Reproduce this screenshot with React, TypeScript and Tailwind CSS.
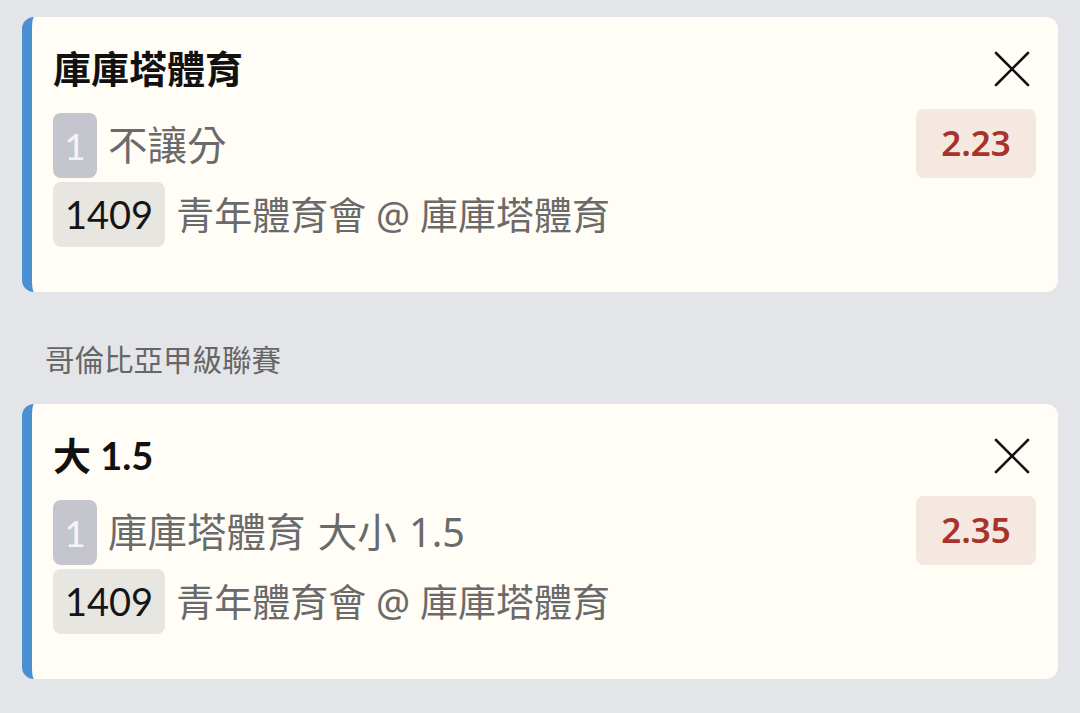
import React from "react";

type Bet = {
  title: string;
  selection: string;
  odds: string;
  matchId: string;
  match: string;
};

const bets: Bet[] = [
  { title: "庫庫塔體育", selection: "不讓分", odds: "2.23", matchId: "1409", match: "青年體育會 @ 庫庫塔體育" },
  { title: "大 1.5", selection: "庫庫塔體育 大小 1.5", odds: "2.35", matchId: "1409", match: "青年體育會 @ 庫庫塔體育" },
];

const noto = { fontFamily: '"Noto Sans", "Noto Sans CJK TC", sans-serif' };

const CloseIcon = () => (
  <svg width="36" height="36" viewBox="0 0 36 36" fill="none" stroke="#111" strokeWidth="2.6" strokeLinecap="round">
    <line x1="2" y1="2" x2="34" y2="34" />
    <line x1="34" y1="2" x2="2" y2="34" />
  </svg>
);

const BetCard = ({ bet }: { bet: Bet }) => (
  <div className="rounded-xl border-l-[10px] border-[#4a8fd2] bg-[#fffdf6] pl-[21px] pr-[22px] pt-[30px] pb-[45px]">
    <div className="flex items-center justify-between pr-[6px]">
      <h2 className="text-[38px] font-bold leading-[43px] text-[#111]">{bet.title}</h2>
      <CloseIcon />
    </div>
    <div className="mt-[19px] flex items-end justify-between">
      <div className="flex items-center gap-[11px]">
        <span className="flex h-[65px] w-[44px] items-center justify-center rounded-lg bg-[#c4c5cd] text-[37px] text-[#f4f4f6]">
          1
        </span>
        <span className="text-[39.5px] leading-[43px] text-[#6a6a6a] [word-spacing:2px]" style={noto}>
          {bet.selection}
        </span>
      </div>
      <span
        className="flex h-[69px] w-[120px] items-center justify-center rounded-lg bg-[#f5e8e0] text-[35px] font-semibold text-[#a8332c]"
        style={noto}
      >
        {bet.odds}
      </span>
    </div>
    <div className="mt-[4px] flex items-center gap-[11px]">
      <span className="flex h-[65px] items-center rounded-lg bg-[#e8e6e0] px-[12px] text-[38px] text-[#151515]">
        {bet.matchId}
      </span>
      <span className="text-[38px] leading-[43px] text-[#6a6a6a]" style={noto}>
        {bet.match}
      </span>
    </div>
  </div>
);

export default function App() {
  return (
    <div
      className="min-h-[713px] w-[1080px] overflow-hidden bg-[#e4e5e8] px-[22px] pt-[17px]"
      style={{ fontFamily: 'Lato, "Noto Sans CJK TC", sans-serif' }}
    >
      <BetCard bet={bets[0]} />
      <div className="mt-[51px] mb-[27px] pl-[23px] text-[29.5px] leading-[34px] text-[#666]">哥倫比亞甲級聯賽</div>
      <BetCard bet={bets[1]} />
    </div>
  );
}
